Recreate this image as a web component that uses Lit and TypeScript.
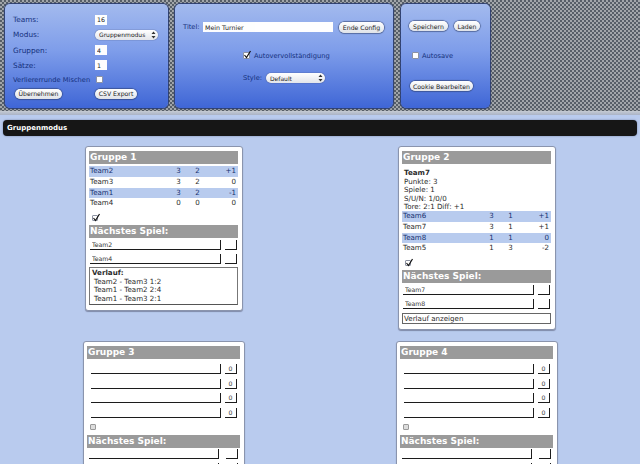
import { LitElement, html, css } from "lit";
import { customElement } from "lit/decorators.js";

type Row = [string, string, string, string];
interface Group {
  name: string;
  wide?: boolean;
  info?: boolean;
  rows?: Row[];
  empty?: boolean;
  next: [string, string];
  history?: string[];
}

const groups: Group[] = [
  {
    name: "Gruppe 1",
    rows: [
      ["Team2", "3", "2", "+1"],
      ["Team3", "3", "2", "0"],
      ["Team1", "3", "2", "-1"],
      ["Team4", "0", "0", "0"],
    ],
    next: ["Team2", "Team4"],
    history: ["Team2 - Team3 1:2", "Team1 - Team2 2:4", "Team1 - Team3 2:1"],
  },
  {
    name: "Gruppe 2",
    info: true,
    rows: [
      ["Team6", "3", "1", "+1"],
      ["Team7", "3", "1", "+1"],
      ["Team8", "1", "1", "0"],
      ["Team5", "1", "3", "-2"],
    ],
    next: ["Team7", "Team8"],
  },
  { name: "Gruppe 3", wide: true, empty: true, next: ["", ""] },
  { name: "Gruppe 4", wide: true, empty: true, next: ["", ""] },
];

@customElement("app-root")
export class AppRoot extends LitElement {
  static styles = css`
    :host {
      display: block;
      width: 640px;
      height: 464px;
      overflow: hidden;
      background: #b9cbee;
      font-family: "DejaVu Sans", sans-serif;
      font-size: 7.1px;
      color: #2a2a2a;
    }
    * { box-sizing: border-box; }
    .top {
      height: 111px;
      display: flex;
      gap: 7px;
      padding: 4px 0 3px 5px;
      background-color: #a2a6aa;
      background-image:
        radial-gradient(circle at 1px 1px, #39414c 0.55px, transparent 1.1px),
        radial-gradient(circle at 3px 3px, #39414c 0.55px, transparent 1.1px);
      background-size: 4px 4px;
    }
    .panel {
      height: 104px;
      border-radius: 5px;
      background: linear-gradient(#a3baee, #7e9dea 45%, #3f66d6);
      box-shadow: 0 0 1px 1px #2c3e70;
      color: #14307c;
      position: relative;
    }
    .p1 { width: 163px; padding: 8px 8px 0; display: flex; flex-direction: column; font-size: 7.3px; }
    .p2 { width: 218px; padding: 17px 8px 0; display: flex; flex-direction: column; font-size: 6.7px; }
    .p3 { width: 89px; margin-left: 1px; padding: 17px 8px 0; display: flex; flex-direction: column; font-size: 6.7px; }
    .f { display: flex; align-items: center; }
    .f > .lab { width: 82px; white-space: nowrap; }
    .f > .lab.tight { font-size: 6.7px; }
    .h15 { height: 15px; }
    .h16 { height: 16px; }
    .h14 { height: 14px; }
    .h13 { height: 13px; padding-left: 2px; }
    .box {
      border: 0;
      background: #fff;
      font: 6.3px "DejaVu Sans", sans-serif;
      color: #222;
      padding: 0 1px 0 2px;
      height: 10px;
      width: 12px;
      outline: none;
      opacity: 0.99;
    }
    .box.title-in { width: 130px; }
    .sel {
      position: relative;
      display: inline-flex;
      height: 10px;
      border-radius: 5px;
      background: linear-gradient(#fff, #e3e5ea);
      box-shadow: 0 0 1px #223;
    }
    .sel.modus { width: 63px; }
    .sel.style { width: 59px; }
    .sel select {
      appearance: none;
      -webkit-appearance: none;
      border: 0;
      background: transparent;
      font: 6px "DejaVu Sans", sans-serif;
      color: #222;
      padding: 0 0 0 4px;
      width: 100%;
      height: 10px;
      outline: none;
    }
    .sel svg { position: absolute; right: 2px; top: 1px; }
    .btn {
      border: 0;
      height: 10px;
      padding: 0;
      border-radius: 5px;
      background: linear-gradient(#fff, #dfe2e8);
      box-shadow: 0 0 1px 0.5px #2a3a66;
      font: 6.2px "DejaVu Sans", sans-serif;
      color: #222;
      white-space: nowrap;
      display: inline-flex;
      align-items: center;
      justify-content: center;
    }
    .w47 { width: 47px; margin-right: 33px; }
    .w42 { width: 42px; }
    .w45 { width: 45px; height: 11px; margin-left: 6px; }
    .w39 { width: 39px; }
    .w26 { width: 26px; }
    .w63 { width: 63px; }
    .titel { width: 20px; }
    .style-lab { width: 23px; }
    .title-row { height: 12px; }
    .auto { height: 7px; margin-top: 19px; padding-left: 59px; gap: 4px; }
    .style-row { height: 10px; margin-top: 14px; padding-left: 60px; }
    .btn-row { height: 10px; gap: 6px; }
    .save-row { height: 7px; margin-top: 21px; padding-left: 2px; gap: 3px; }
    .cookie-row { height: 10px; margin-top: 22px; padding-left: 1px; }
    .cb {
      position: relative;
      display: inline-block;
      flex: none;
      width: 6px;
      height: 6px;
      background: #fff;
      border: 1px solid #8d93a3;
      border-radius: 1px;
    }
    .cb.big { width: 7px; height: 7px; margin-left: 1px; }
    .cb.off { background: #dcdcdc; border-color: #999; }
    .cb svg { position: absolute; left: -1px; top: -3px; }
    .band {
      height: 4px;
      background: linear-gradient(#c5cbd4, #aab3c6);
    }
    .bar {
      margin: 5px 3px 0;
      height: 16px;
      background: #161616;
      border-radius: 4px;
      box-shadow: 0 0 2px #6f7da0;
      color: #fff;
      font-weight: 700;
      font-size: 7px;
      display: flex;
      align-items: center;
      padding-left: 4px;
    }
    .grid {
      display: grid;
      grid-template-columns: 313px 162px;
      padding: 10px 0 0 83px;
      row-gap: 11px;
      align-items: start;
    }
    .grid .narrow { margin: 0 2px; }
    .card {
      background: #fff;
      border: 1px solid #8a94ad;
      border-radius: 3px;
      box-shadow: 0 1px 1px #7f8aa8;
      padding: 4px 4px 5px 3px;
      width: 158px;
    }
    .card.wide { width: 162px; }
    .title {
      background: #9a9a9a;
      color: #fff;
      font-weight: 700;
      font-size: 9px;
      line-height: 13px;
      height: 13px;
      padding-left: 1px;
      white-space: nowrap;
    }
    .info { padding: 5px 2px 0; line-height: 8.6px; height: 46px; }
    .info b { display: block; }
    .table { margin-top: 2px; }
    .info + .table { margin-top: 1px; }
    .row {
      display: grid;
      grid-template-columns: 79px 19px 19px 29px;
      height: 10.75px;
      line-height: 10.75px;
      padding-left: 1px;
    }
    .row.on { background: #b8cbee; color: #16306e; }
    .row span:nth-child(2), .row span:nth-child(3) { text-align: center; }
    .row span:nth-child(4) { text-align: right; }
    .check { display: flex; align-items: center; height: 16px; padding: 2px 0 0 3px; }
    .wide .check { height: 17px; }
    .pair { display: flex; gap: 4px; height: 14.4px; align-items: flex-end; padding-left: 1px; }
    .pair.next { height: 14px; }
    .wide .pair { padding-left: 3.5px; }
    .pair.first { height: 11.5px; }
    .wide .pair.next { padding-left: 2px; gap: 7px; }
    .field {
      border: 0;
      border-bottom: 1px solid #1a1a1a;
      border-right: 1.5px solid #1a1a1a;
      height: 10px;
      background: #fff;
      font: 6.2px "DejaVu Sans", sans-serif;
      color: #333;
      padding: 0 1px 0 2px;
      outline: none;
      min-width: 0;
      opacity: 0.99;
    }
    .field.name { width: 131px; }
    .field.score { width: 12px; text-align: center; }
    .wide .field.name { width: 130px; }
    .gap { height: 1px; }
    .hist {
      margin-top: 3.5px;
      border: 1px solid #777;
      border-bottom-color: #555;
      height: 38px;
      padding: 1px 2px;
      line-height: 8.6px;
    }
    .hist b { display: block; }
    .hist div { padding-left: 2px; }
    .show {
      margin-top: 4.5px;
      border: 1px solid #666;
      height: 11px;
      line-height: 9px;
      padding-left: 1px;
    }
  `;

  private arrows() {
    return html`<svg width="5" height="8" viewBox="0 0 5 8"><path d="M2.5 0.5 4.5 3H.5zM2.5 7.5 4.5 5H.5z" fill="#333" /></svg>`;
  }

  private cb(checked: boolean, cls = "") {
    return html`<span class="cb ${cls}" role="checkbox" aria-checked=${checked ? "true" : "false"}>
      ${checked
        ? html`<svg width="9" height="9" viewBox="0 0 9 9"><path d="M1.5 5 3.5 7.5 7.5 1" fill="none" stroke="#111" stroke-width="1.2" /></svg>`
        : ""}
    </span>`;
  }

  private pair(a: string, b: string, cls = "") {
    return html`<div class="pair ${cls}">
      <input class="field name" .value=${a} />
      <input class="field score" .value=${b} />
    </div>`;
  }

  private card(g: Group) {
    return html`<section class="card ${g.wide ? "wide" : "narrow"}">
      <div class="title">${g.name}</div>
      ${g.info
        ? html`<div class="info"><b>Team7</b>Punkte: 3<br />Spiele: 1<br />S/U/N: 1/0/0<br />Tore: 2:1 Diff: +1</div>`
        : ""}
      ${g.rows
        ? html`<div class="table">
            ${g.rows.map(
              (r, n) => html`<div class="row ${n % 2 === 0 ? "on" : ""}">
                ${r.map((c) => html`<span>${c}</span>`)}
              </div>`
            )}
          </div>`
        : html`<div class="gap"></div>
            ${[0, 1, 2, 3].map(() => this.pair("", "0"))}`}
      <div class="check">${this.cb(!g.empty, g.empty ? "off" : "")}</div>
      <div class="title">Nächstes Spiel:</div>
      ${this.pair(g.next[0], "", "next first")}
      ${this.pair(g.next[1], "", "next")}
      ${g.history
        ? html`<div class="hist"><b>Verlauf:</b>${g.history.map((h) => html`<div>${h}</div>`)}</div>`
        : g.info
        ? html`<div class="show">Verlauf anzeigen</div>`
        : ""}
    </section>`;
  }

  render() {
    return html`
      <div class="top">
        <div class="panel p1">
          <div class="f h15"><span class="lab">Teams:</span><input class="box" value="16" /></div>
          <div class="f h15"><span class="lab">Modus:</span>
            <span class="sel modus"><select><option>Gruppenmodus</option></select>${this.arrows()}</span></div>
          <div class="f h16"><span class="lab">Gruppen:</span><input class="box" value="4" /></div>
          <div class="f h14"><span class="lab">Sätze:</span><input class="box" value="1" /></div>
          <div class="f h15"><span class="lab tight">Verliererrunde Mischen</span>${this.cb(false, "big")}</div>
          <div class="f h13">
            <button class="btn w47">Übernehmen</button>
            <button class="btn w42">CSV Export</button>
          </div>
        </div>
        <div class="panel p2">
          <div class="f title-row">
            <span class="titel">Titel:</span>
            <input class="box title-in" value="Mein Turnier" />
            <button class="btn w45">Ende Config</button>
          </div>
          <div class="f auto">
            ${this.cb(true, "big")}<span>Autovervollständigung</span>
          </div>
          <div class="f style-row">
            <span class="style-lab">Style:</span>
            <span class="sel style"><select><option>Default</option></select>${this.arrows()}</span>
          </div>
        </div>
        <div class="panel p3">
          <div class="f btn-row">
            <button class="btn w39">Speichern</button>
            <button class="btn w26">Laden</button>
          </div>
          <div class="f save-row">
            ${this.cb(false, "big")}<span>Autosave</span>
          </div>
          <div class="f cookie-row">
            <button class="btn w63">Cookie Bearbeiten</button>
          </div>
        </div>
      </div>
      <div class="band"></div>
      <div class="bar">Gruppenmodus</div>
      <div class="grid">${groups.map((g) => this.card(g))}</div>
    `;
  }
}
